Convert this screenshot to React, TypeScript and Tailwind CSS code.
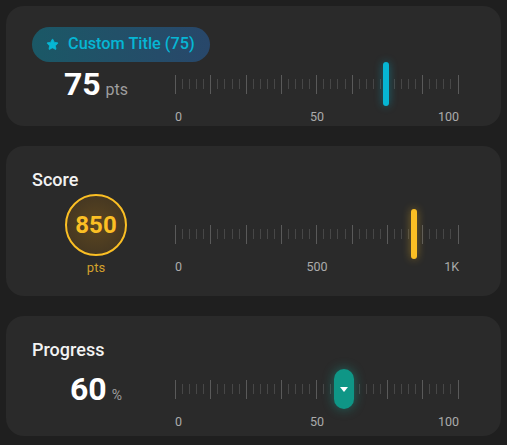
import { Star } from "lucide-react";

type Marker = "line-cyan" | "line-amber" | "thumb";

function Ticks() {
  return (
    <div className="flex h-full items-center justify-between">
      {Array.from({ length: 41 }).map((_, i) => (
        <div
          key={i}
          className={
            i % 5 === 0
              ? "h-[19px] w-px bg-[#5a5a5a]"
              : "h-[10px] w-px bg-[#474747]"
          }
        />
      ))}
    </div>
  );
}

function Scale({
  pct,
  labels,
  marker,
  className,
}: {
  pct: number;
  labels: [string, string, string];
  marker: Marker;
  className?: string;
}) {
  const left = `${pct * 281}px`;
  return (
    <div className={`ml-[15px] w-[284px] ${className ?? ""}`}>
      <div className="relative h-[44px]">
        <Ticks />
        {marker === "line-cyan" && (
          <div
            className="absolute top-0 h-[44px] w-[6px] -translate-x-1/2 rounded-full bg-[#06b6d4] shadow-[0_0_8px_rgba(6,182,212,0.45)]"
            style={{ left }}
          />
        )}
        {marker === "line-amber" && (
          <div
            className="absolute top-[-3px] h-[50px] w-[6px] -translate-x-1/2 rounded-full bg-[#fbbf24] shadow-[0_0_8px_rgba(251,191,36,0.45)]"
            style={{ left }}
          />
        )}
        {marker === "thumb" && (
          <div
            className="absolute top-[2px] flex h-[40px] w-[20px] -translate-x-1/2 items-center justify-center rounded-full bg-[#0f9686] shadow-[0_0_12px_rgba(20,184,166,0.45)]"
            style={{ left }}
          >
            <div className="h-0 w-0 border-x-[4px] border-t-[5px] border-x-transparent border-t-white" />
          </div>
        )}
      </div>
      <div className="mt-[3px] flex text-[12.5px] leading-4 text-[#ababab]">
        <span className="flex-1">{labels[0]}</span>
        <span>{labels[1]}</span>
        <span className="flex-1 text-right">{labels[2]}</span>
      </div>
    </div>
  );
}

export default function App() {
  return (
    <div className="flex min-h-[445px] flex-col gap-[20px] bg-[#1f1f1f] p-[6px] font-['Roboto',sans-serif]">
      {/* custom title card */}
      <div className="h-[120px] rounded-[18px] bg-[#2a2a2a] px-[26px] pt-[21px]">
        <div className="flex h-[35px] w-fit items-center gap-[9px] rounded-full bg-gradient-to-r from-[#1a5866] to-[#28476a] pr-[15px] pl-[14px] text-[16.3px] font-medium text-[#06b6d4]">
          <Star size={13} fill="currentColor" strokeWidth={1.5} />
          <span>Custom Title (75)</span>
        </div>
        <div className="flex items-start">
          <div className="mt-[6px] flex w-[128px] items-baseline justify-center">
            <span className="text-[32px] leading-none font-bold text-white">75</span>
            <span className="ml-[5px] text-[16px] text-[#9e9e9e]">pts</span>
          </div>
          <Scale pct={0.75} labels={["0", "50", "100"]} marker="line-cyan" />
        </div>
      </div>

      {/* score card */}
      <div className="h-[150px] rounded-[18px] bg-[#2a2a2a] px-[26px] pt-[20px]">
        <div className="text-[18px] leading-[28px] font-medium text-[#f2f2f2]">Score</div>
        <div className="flex items-start">
          <div className="flex w-[128px] flex-col items-center">
            <div className="flex h-[62px] w-[62px] items-center justify-center rounded-full border-2 border-[#fbbf24] bg-[radial-gradient(circle,#5c4620_0%,#3d3222_100%)]">
              <span className="text-[24px] leading-none font-bold text-[#fbbf24]">850</span>
            </div>
            <span className="mt-[4px] text-[13px] leading-4 text-[#d2a02c]">pts</span>
          </div>
          <Scale pct={0.85} labels={["0", "500", "1K"]} marker="line-amber" className="mt-[18px]" />
        </div>
      </div>

      {/* progress card */}
      <div className="h-[120px] rounded-[18px] bg-[#2a2a2a] px-[26px] pt-[20px]">
        <div className="text-[18px] leading-[28px] font-medium text-[#f2f2f2]">Progress</div>
        <div className="flex items-start">
          <div className="mt-[9px] flex w-[128px] items-baseline justify-center">
            <span className="text-[32px] leading-none font-bold text-white">60</span>
            <span className="ml-[5px] text-[14px] text-[#9e9e9e]">%</span>
          </div>
          <Scale pct={0.6} labels={["0", "50", "100"]} marker="thumb" className="mt-[3px]" />
        </div>
      </div>
    </div>
  );
}
